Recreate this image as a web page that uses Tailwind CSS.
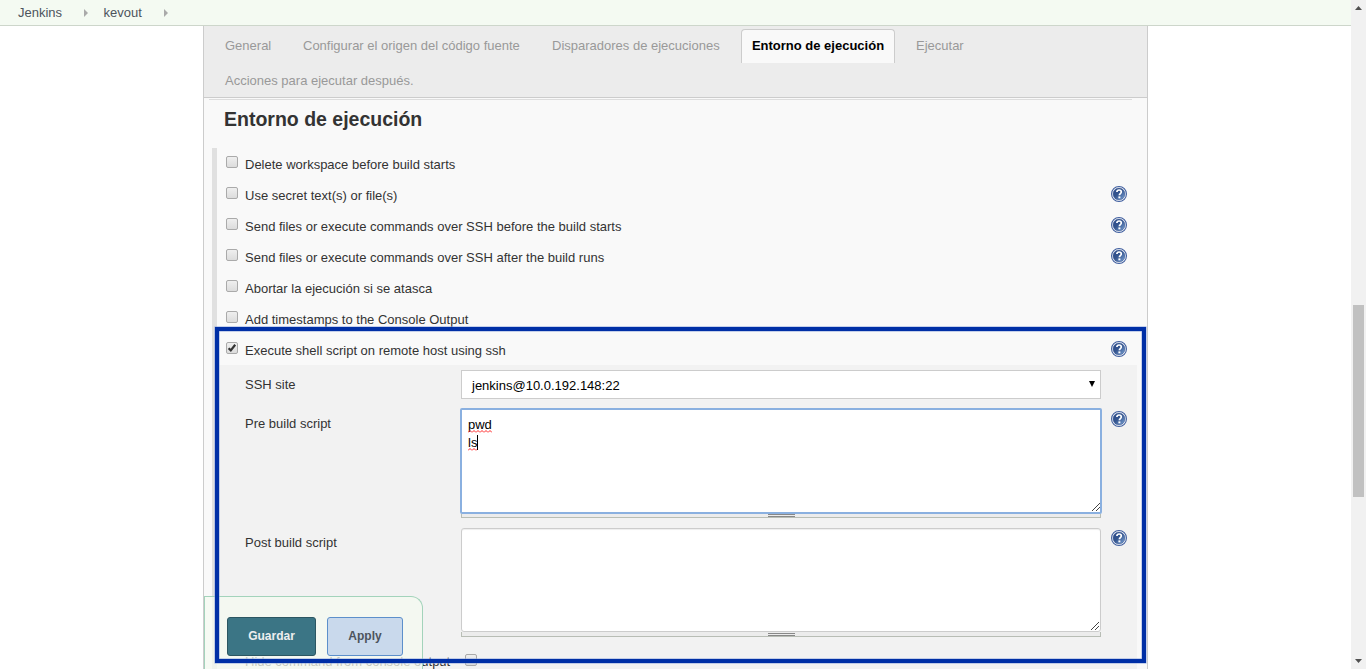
<!DOCTYPE html>
<html lang="es">
<head>
<meta charset="utf-8">
<title>kevout Config [Jenkins]</title>
<script src="https://cdn.jsdelivr.net/npm/@tailwindcss/browser@4"></script>
</head>
<body class="relative flex h-[669px] w-[1366px] overflow-hidden bg-white font-['Liberation_Sans',Arial,sans-serif] text-[13px] leading-[18px] text-[#333]">
<svg class="absolute size-0">
  <defs>
    <linearGradient id="hg" x1="0" y1="0" x2="1" y2="1"><stop offset="0" stop-color="#2c4a8a"/><stop offset=".45" stop-color="#34558f"/><stop offset="1" stop-color="#7fa6d8"/></linearGradient>
    <symbol id="help" viewBox="0 0 16 16">
      <circle cx="8" cy="8" r="7.45" fill="#fff" stroke="#405f9f" stroke-width="1.1"/>
      <circle cx="8" cy="8" r="6" fill="url(#hg)" stroke="#36548f" stroke-width=".5"/>
      <path d="M5.9 6.1C5.9 4.7 6.8 4 8.1 4s2.2.8 2.2 2c0 1.5-1.9 1.6-1.9 3.2" fill="none" stroke="#fff" stroke-width="1.7"/>
      <rect x="7.4" y="10.4" width="2" height="1.9" fill="#fff"/>
    </symbol>
    <symbol id="grip" viewBox="0 0 8 8"><path d="M0 8L8 0M4 8l4-4" stroke="#444" stroke-width="1" fill="none"/></symbol>
    <pattern id="wave" width="4" height="3" patternUnits="userSpaceOnUse"><path d="M0 2.5L2 .5l2 2" fill="none" stroke="#f22" stroke-width="1"/></pattern>
  </defs>
</svg>

<main class="flex w-[1351px] flex-col">
  <nav class="flex h-[26px] shrink-0 items-center border-b border-[#cdd6cb] bg-[#f4faf2] pl-[18px] text-[#4d545d]">
    <span class="w-[66px]">Jenkins</span>
    <svg class="h-2 w-1" viewBox="0 0 4 8"><path d="M0 0l4 4-4 4z" fill="#aaa"/></svg>
    <span class="ml-[15.5px] w-[60.5px]">kevout</span>
    <svg class="h-2 w-1" viewBox="0 0 4 8"><path d="M0 0l4 4-4 4z" fill="#aaa"/></svg>
  </nav>

  <section class="ml-[203px] flex h-[643px] w-[945px] flex-col border-x border-[#ccc] bg-[#f9f9f9]">
    <div class="h-[72px] shrink-0 border-b border-[#ccc] bg-[#ececec] pt-[3px] text-[#999]">
      <div class="flex h-[34px] pl-[21px] leading-[34px]">
        <span class="w-[78px]">General</span>
        <span class="w-[249px]">Configurar el origen del código fuente</span>
        <span class="w-[189px]">Disparadores de ejecuciones</span>
        <span class="w-[154px] rounded-t border border-b-0 border-[#ccc] bg-[#f9f9f9] text-center leading-8 font-bold text-black">Entorno de ejecución</span>
        <span class="ml-[21px]">Ejecutar</span>
      </div>
      <div class="pt-px pl-[21px] leading-[34px]">Acciones para ejecutar después.</div>
    </div>
    <div class="mt-px ml-[5px] h-px w-[923px] shrink-0 bg-[#ddd]"></div>
    <h1 class="mt-[7px] ml-5 h-[41px] shrink-0 text-[19.5px] leading-6 font-bold">Entorno de ejecución</h1>

    <div class="ml-2 flex-1 border-l-[5px] border-[#e0e0e0]">
      <div class="flex h-[31px] pt-2 pl-[9px]"><i class="mr-[7px] size-3 rounded-[2px] border border-[#aaa] bg-linear-to-b from-[#efefef] to-[#dcdcdc]"></i><span>Delete workspace before build starts</span></div>
      <div class="flex h-[31px] pt-2 pl-[9px]"><i class="mr-[7px] size-3 rounded-[2px] border border-[#aaa] bg-linear-to-b from-[#efefef] to-[#dcdcdc]"></i><span class="w-[866px]">Use secret text(s) or file(s)</span><svg class="-mt-px size-4"><use href="#help"/></svg></div>
      <div class="flex h-[31px] pt-2 pl-[9px]"><i class="mr-[7px] size-3 rounded-[2px] border border-[#aaa] bg-linear-to-b from-[#efefef] to-[#dcdcdc]"></i><span class="w-[866px]">Send files or execute commands over SSH before the build starts</span><svg class="-mt-px size-4"><use href="#help"/></svg></div>
      <div class="flex h-[31px] pt-2 pl-[9px]"><i class="mr-[7px] size-3 rounded-[2px] border border-[#aaa] bg-linear-to-b from-[#efefef] to-[#dcdcdc]"></i><span class="w-[866px]">Send files or execute commands over SSH after the build runs</span><svg class="-mt-px size-4"><use href="#help"/></svg></div>
      <div class="flex h-[31px] pt-2 pl-[9px]"><i class="mr-[7px] size-3 rounded-[2px] border border-[#aaa] bg-linear-to-b from-[#efefef] to-[#dcdcdc]"></i><span>Abortar la ejecución si se atasca</span></div>
      <div class="flex h-[31px] pt-2 pl-[9px]"><i class="mr-[7px] size-3 rounded-[2px] border border-[#aaa] bg-linear-to-b from-[#efefef] to-[#dcdcdc]"></i><span>Add timestamps to the Console Output</span></div>
      <div class="flex h-[31px] pt-2 pl-[9px]"><i class="mr-[7px] size-3 rounded-[2px] border border-[#aaa] bg-linear-to-b from-[#efefef] to-[#dcdcdc]"><svg class="size-[10px]" viewBox="0 0 10 10"><path d="M1.6 5.2l2.2 2.2L8.2 1.8" fill="none" stroke="#333" stroke-width="2.2"/></svg></i><span class="w-[866px]">Execute shell script on remote host using ssh</span><svg class="-mt-px size-4"><use href="#help"/></svg></div>

      <div class="h-[304px] w-[920px] bg-[#f2f2f2] pt-[5px] pl-7">
        <div class="flex h-[38px]">
          <span class="w-[216px] pt-[6px]">SSH site</span>
          <div class="flex h-[29px] w-[640px] justify-between border border-[#ccc] bg-white pt-[6px] pr-1 pl-[10px] text-black"><span>jenkins@10.0.192.148:22</span><svg class="mt-[3px] size-2" viewBox="0 0 8 8"><path d="M1 1h6L4 7z" fill="#000"/></svg></div>
        </div>
        <div class="flex h-[120px]">
          <span class="w-[215px] pt-[7px]">Pre build script</span>
          <div class="flex w-[642px] flex-col">
            <div class="relative h-[106px] rounded-[2px] border-2 border-[#8ab0e0] bg-white px-[6px] pt-[6px] text-black">
              <div class="relative">pwd<svg class="absolute top-[14px] left-0 h-[3px] w-6"><rect width="24" height="3" fill="url(#wave)"/></svg></div>
              <div class="relative flex">ls<i class="mt-[1px] h-[15px] w-px bg-black"></i><svg class="absolute top-[14px] left-0 h-[3px] w-[9px]"><rect width="9" height="3" fill="url(#wave)"/></svg></div>
              <svg class="absolute right-0 bottom-px size-2"><use href="#grip"/></svg>
            </div>
            <div class="mx-px flex h-1 justify-center border border-t-0 border-[#b8bdb5] bg-[#ececec]"><i class="h-[3px] w-[27px] border-y border-[#888]"></i></div>
          </div>
          <svg class="mt-[3px] ml-[9px] size-4"><use href="#help"/></svg>
        </div>
        <div class="flex h-[125px]">
          <span class="w-[216px] pt-[6px]">Post build script</span>
          <div class="flex w-[640px] flex-col">
            <div class="relative h-[104px] rounded-[3px] border border-[#ccc] bg-white shadow-[inset_0_1px_1px_#eee]"><svg class="absolute right-px bottom-px size-2"><use href="#grip"/></svg></div>
            <div class="flex h-[5px] justify-center border border-t-0 border-[#b8bdb5] bg-[#ececec] pt-px"><i class="h-[3px] w-[27px] border-y border-[#888]"></i></div>
          </div>
          <svg class="mt-[2px] ml-[10px] size-4"><use href="#help"/></svg>
        </div>
        <div class="flex"><span class="w-[220px]">Hide command from console output</span><i class="mt-[1px] size-3 rounded-[2px] border border-[#aaa] bg-linear-to-b from-[#efefef] to-[#dcdcdc]"></i></div>
      </div>
    </div>
  </section>
</main>

<aside class="flex w-[15px] flex-col items-center bg-[#f1f1f1]">
  <svg class="mt-[6px] h-1 w-[7px]" viewBox="0 0 7 4"><path d="M0 4L3.5 0 7 4z" fill="#505050"/></svg>
  <div class="mt-[295px] h-[192px] w-[11px] bg-[#c1c1c1]"></div>
  <svg class="mt-[162px] h-1 w-[7px]" viewBox="0 0 7 4"><path d="M0 0h7L3.5 4z" fill="#505050"/></svg>
</aside>

<div class="absolute top-[596px] left-[204px] flex h-[73px] w-[219px] gap-[11px] rounded-tr-xl border border-b-0 border-[#a3d3bb] bg-[#f4faf0]/75 pt-5 pl-[22px] text-[12px] font-bold">
  <button class="h-[39px] w-[89px] rounded-[3px] border border-[#2b5662] bg-[#3b7585] pb-0.5 text-[#eee]">Guardar</button>
  <button class="h-[39px] w-[76px] rounded-[3px] border border-[#5c8fcb] bg-[#c9d9ec] pb-0.5 text-[#4d545d]">Apply</button>
</div>
<div class="absolute top-[327px] left-[215px] h-[336px] w-[931px] border-4 border-[#002fa6] shadow-[0_0_0_.5px_#8fa5dc,inset_0_0_0_.5px_#8fa5dc]"></div>
</body>
</html>
